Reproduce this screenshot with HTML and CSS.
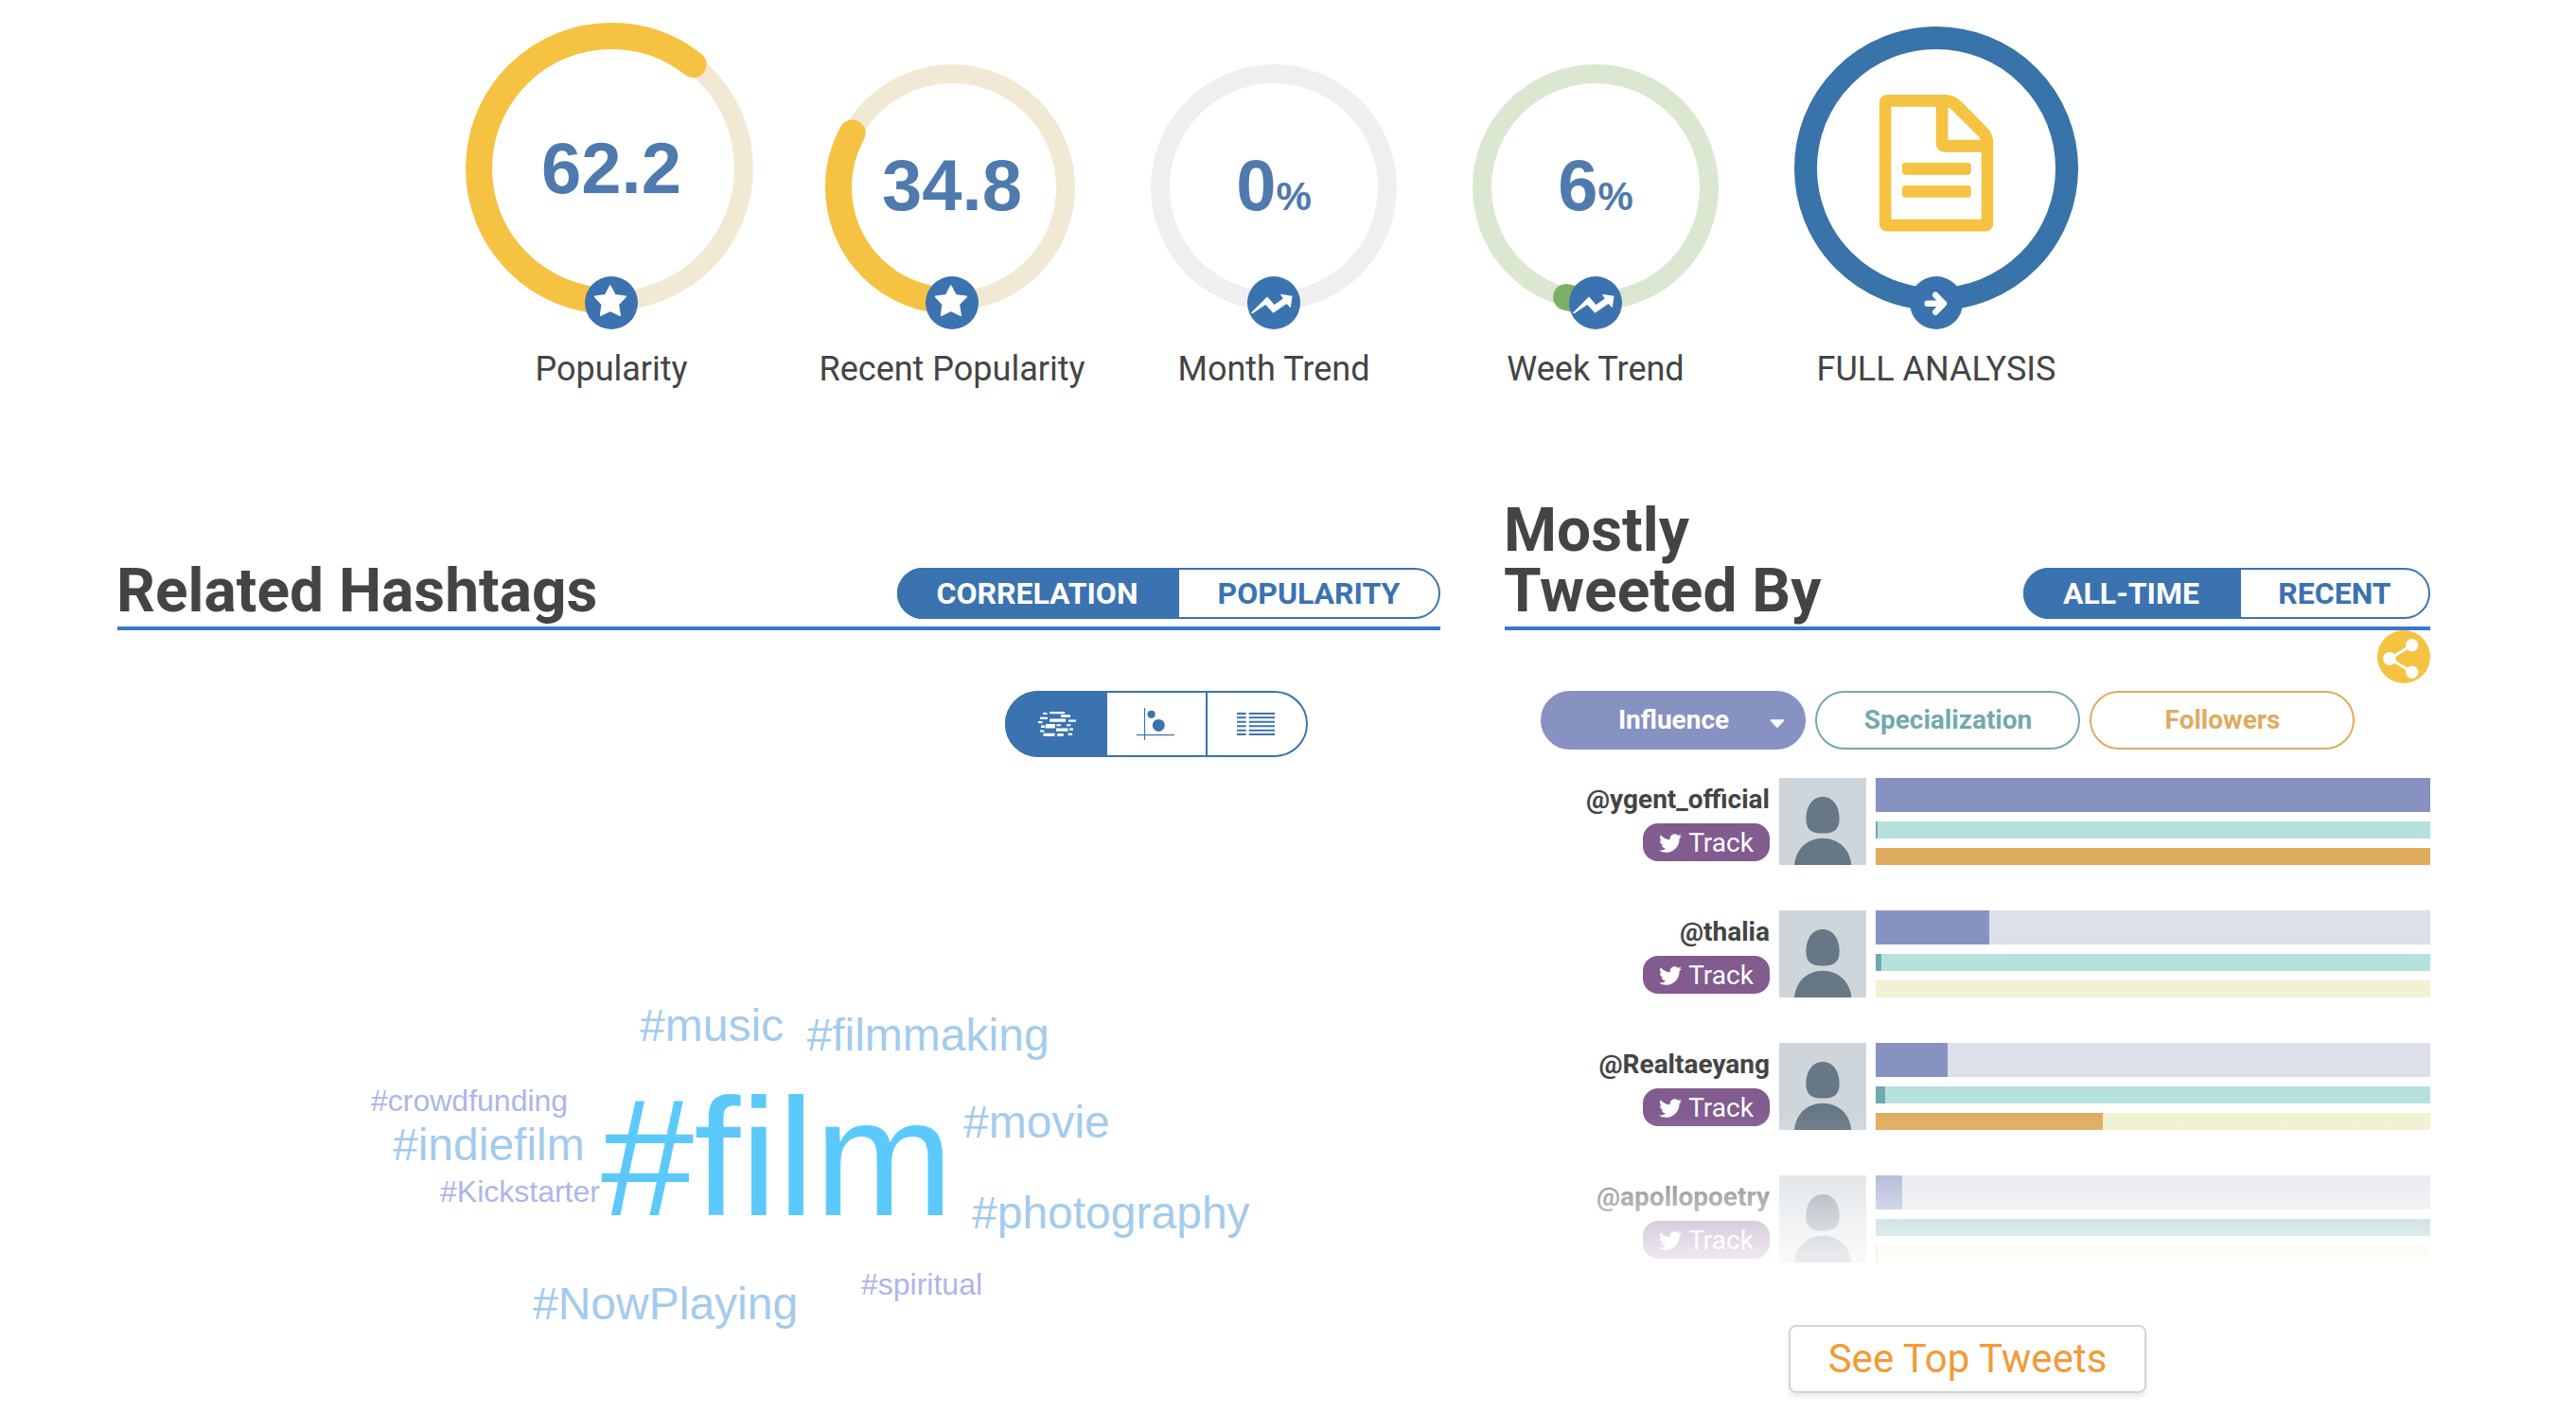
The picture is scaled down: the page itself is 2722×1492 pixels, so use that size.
FILE: index.html
```html
<!DOCTYPE html>
<html lang="en">
<head>
<meta charset="utf-8">
<title>#film hashtag analytics</title>
<link rel="stylesheet" href="styles.css">
</head>
<body>
<svg class="defs" aria-hidden="true">
  <symbol id="star" viewBox="0 0 56 56"><path d="M26.8 10 32 19.8 43.2 21.4 35.3 29.6 37.2 41.4 26.8 36.3 16.6 41.4 18.2 29.6 10.6 21.4 21.7 19.8Z" fill="#fff" stroke="#fff" stroke-width="1.6" stroke-linejoin="round"/></symbol>
  <symbol id="trend" viewBox="0 0 56 56"><path d="M4 38.6 21 21.5 28.6 30 37.8 23.6 34.8 18.7 47.6 20.7 45.7 33.2 41.5 29 27.4 38.7 19.2 29.9 5.2 39.4Z" fill="#fff"/></symbol>
  <symbol id="arrow" viewBox="0 0 56 56"><path d="M18.7 28.7H35M27.2 19.7 36 28.7 27.2 37.8" fill="none" stroke="#fff" stroke-width="6.4" stroke-linecap="round" stroke-linejoin="round"/></symbol>
  <symbol id="bird" viewBox="0 48 512 416"><path fill="#fff" d="M459.37 151.716c.325 4.548.325 9.097.325 13.645 0 138.72-105.583 298.558-298.558 298.558-59.452 0-114.68-17.219-161.137-47.106 8.447.974 16.568 1.299 25.34 1.299 49.055 0 94.213-16.568 130.274-44.832-46.132-.975-84.792-31.188-98.112-72.772 6.498.974 12.995 1.624 19.818 1.624 9.421 0 18.843-1.3 27.614-3.573-48.081-9.747-84.143-51.98-84.143-102.985v-1.299c13.969 7.797 30.214 12.67 47.431 13.319-28.264-18.843-46.781-51.005-46.781-87.391 0-19.492 5.197-37.36 14.294-52.954 51.655 63.675 129.3 105.258 216.365 109.807-1.624-7.797-2.599-15.918-2.599-24.04 0-57.828 46.782-104.934 104.934-104.934 30.213 0 57.502 12.67 76.67 33.137 23.715-4.548 46.456-13.32 66.599-25.34-7.798 24.366-24.366 44.833-46.132 57.827 21.117-2.273 41.584-8.122 60.426-16.243-14.292 20.791-32.161 39.308-52.628 54.253z"/></symbol>
  <symbol id="avatar" viewBox="0 0 92 92"><rect width="92" height="92" fill="#ced6dc"/><path d="M46 20C57 20 63.6 30 63.6 43 63.6 54 59 58.6 46 58.6S28.4 54 28.4 43C28.4 30 35 20 46 20Z" fill="#687785"/><path d="M16 92C17.5 76 29 63.8 46 63.8S75 76 76.3 92Z" fill="#687785"/></symbol>
</svg>

<main class="page">
  <section class="gauges">
    <div class="gauge gauge-lg">
      <div class="dial">
        <svg class="ring" viewBox="-150 -150 300 300">
          <circle class="track warm" r="140"/>
          <circle class="value gold" r="140" pathLength="360" stroke-dasharray="218.2 360"/>
          <text class="score" y="26">62.2</text>
        </svg>
        <span class="badge"><svg><use href="#star"/></svg></span>
      </div>
      <div class="label">Popularity</div>
    </div>
    <div class="gauge">
      <div class="dial">
        <svg class="ring" viewBox="-130 -130 260 260">
          <circle class="track warm" r="120"/>
          <circle class="value gold" r="120" pathLength="360" stroke-dasharray="118.6 360"/>
          <text class="score" y="24">34.8</text>
        </svg>
        <span class="badge"><svg><use href="#star"/></svg></span>
      </div>
      <div class="label">Recent Popularity</div>
    </div>
    <div class="gauge">
      <div class="dial">
        <svg class="ring" viewBox="-130 -130 260 260">
          <circle class="track grey" r="120"/>
          <text class="score" y="24">0<tspan class="unit">%</tspan></text>
        </svg>
        <span class="badge"><svg><use href="#trend"/></svg></span>
      </div>
      <div class="label">Month Trend</div>
    </div>
    <div class="gauge">
      <div class="dial">
        <svg class="ring" viewBox="-130 -130 260 260">
          <circle class="track mint" r="120"/>
          <circle class="value green" r="120" pathLength="360" stroke-dasharray="14.9 360"/>
          <text class="score" y="24">6<tspan class="unit">%</tspan></text>
        </svg>
        <span class="badge"><svg><use href="#trend"/></svg></span>
      </div>
      <div class="label">Week Trend</div>
    </div>
    <div class="gauge gauge-lg">
      <div class="dial">
        <svg class="ring" viewBox="-150 -150 300 300">
          <circle class="full" r="138"/>
          <svg x="-60.3" y="-78" width="120.7" height="144.7" viewBox="407 300 362 434">
            <path fill="#f5c242" fill-rule="evenodd" d="M433 300H615Q645 300 667 322L746 401Q769 424 769 454V708A26 26 0 0 1 743 734H433A26 26 0 0 1 407 708V326A26 26 0 0 1 433 300ZM445 338V695H731V482H614A27 27 0 0 1 587 455V338ZM625 341V443H728Q726 437 722 433L636 347Q631 342 625 341Z"/>
            <rect x="480" y="516" width="218" height="38" rx="10" fill="#f5c242"/>
            <rect x="480" y="588" width="218" height="38" rx="10" fill="#f5c242"/>
          </svg>
        </svg>
        <span class="badge"><svg><use href="#arrow"/></svg></span>
      </div>
      <div class="label">FULL ANALYSIS</div>
    </div>
  </section>

  <div class="panels">
    <section class="panel">
      <header class="panel-head">
        <h2>Related Hashtags</h2>
        <div class="toggle"><span class="opt on w-correlation">CORRELATION</span><span class="opt w-popularity">POPULARITY</span></div>
      </header>
      <div class="views">
        <span class="view on">
          <svg viewBox="0 0 40 34" fill="#fff"><path d="M5 5h4.4v2H5zM12.2 4h16v2.2h-16zM24 7.3h10v2.8H24zM2 9.7h8v2.2H2zM12.2 11.5h17v3.2h-17zM32 12.5h8v2.3h-8zM0 14h4.4v2.2H0zM3 18.4h4.3v2.5H3zM8 17h10v4.6H8zM19.5 17.2h4.4v2.1h-4.4zM30 17.2h4.4v2.1H30zM19 21.5h12.6v3.2H19zM33 21.4h4v2.3h-4zM2 23.4h4.4v2.2H2zM5.5 26.8h12V30h-12zM20.2 27h6.6v3h-6.6zM31.7 26.8h4.4V29h-4.4z"/></svg>
        </span>
        <span class="view">
          <svg viewBox="0 0 40 34" fill="#3b72b0"><path d="M8 0h1.1v34H8zM0 28h40.3v1.3H0z"/><circle cx="15.6" cy="6.8" r="4.1"/><circle cx="23.3" cy="18.4" r="6.5"/></svg>
        </span>
        <span class="view">
          <svg viewBox="0 0 40 34" fill="#3b72b0"><path d="M0 5h9.7v2H0zM0 9.2h9.7v2H0zM0 13.7h9.7v2H0zM0 18.3h9.7v2H0zM0 22.7h9.7v2H0zM0 27h9.7v2H0zM12.7 5H40v2H12.7zM12.7 9.2H40v2H12.7zM12.7 13.7H40v2H12.7zM12.7 18.3H40v2H12.7zM12.7 22.7H40v2H12.7zM12.7 27H40v2H12.7z"/></svg>
        </span>
      </div>
      <svg class="cloud" viewBox="124 800 1398 692">
        <text class="xl" x="635" y="1284">#film</text>
        <text class="md" x="676" y="1100">#music</text>
        <text class="md" x="852.5" y="1110">#filmmaking</text>
        <text class="md" x="415" y="1226">#indiefilm</text>
        <text class="md" x="1018" y="1202">#movie</text>
        <text class="md" x="1027" y="1298">#photography</text>
        <text class="md" x="563" y="1394">#NowPlaying</text>
        <text class="sm" x="392" y="1174">#crowdfunding</text>
        <text class="sm" x="465" y="1270">#Kickstarter</text>
        <text class="sm" x="910" y="1368">#spiritual</text>
      </svg>
    </section>

    <section class="panel">
      <header class="panel-head">
        <h2>Mostly<br>Tweeted By</h2>
        <div class="toggle"><span class="opt on w-alltime">ALL-TIME</span><span class="opt w-recent">RECENT</span></div>
      </header>
      <span class="share"><svg viewBox="0 0 56 56"><path d="M36.7 15.7 13 30 36.7 44.3" fill="none" stroke="#fff" stroke-width="3"/><circle cx="36.7" cy="15.7" r="6.7" fill="#fff"/><circle cx="13" cy="30" r="6.9" fill="#fff"/><circle cx="36.7" cy="44.3" r="6.7" fill="#fff"/></svg></span>
      <div class="tabs">
        <span class="tab influence">Influence<svg class="caret" viewBox="0 0 16 10"><path d="M1.3 1H14.7L8 8.2Z" fill="#fff" stroke="#fff" stroke-width="1.6" stroke-linejoin="round"/></svg></span>
        <span class="tab special">Specialization</span>
        <span class="tab followers">Followers</span>
      </div>
      <div class="users">
        <div class="user">
          <div class="who"><span class="name">@ygent_official</span><span class="track-btn"><svg><use href="#bird"/></svg>Track</span></div>
          <svg class="avatar"><use href="#avatar"/></svg>
          <div class="bars"><div class="bar inf"><i style="width:100%"></i></div><div class="bar spe"><i style="width:2px"></i></div><div class="bar fol"><i style="width:100%"></i></div></div>
        </div>
        <div class="user">
          <div class="who"><span class="name">@thalia</span><span class="track-btn"><svg><use href="#bird"/></svg>Track</span></div>
          <svg class="avatar"><use href="#avatar"/></svg>
          <div class="bars"><div class="bar inf"><i style="width:20.5%"></i></div><div class="bar spe"><i style="width:1%"></i></div><div class="bar fol"></div></div>
        </div>
        <div class="user">
          <div class="who"><span class="name">@Realtaeyang</span><span class="track-btn"><svg><use href="#bird"/></svg>Track</span></div>
          <svg class="avatar"><use href="#avatar"/></svg>
          <div class="bars"><div class="bar inf"><i style="width:12.9%"></i></div><div class="bar spe"><i style="width:1.7%"></i></div><div class="bar fol"><i style="width:40.9%"></i></div></div>
        </div>
        <div class="user">
          <div class="who"><span class="name">@apollopoetry</span><span class="track-btn"><svg><use href="#bird"/></svg>Track</span></div>
          <svg class="avatar"><use href="#avatar"/></svg>
          <div class="bars"><div class="bar inf"><i style="width:4.8%"></i></div><div class="bar spe"><i style="width:100%"></i></div><div class="bar fol"><i style="width:2px"></i></div></div>
        </div>
        <div class="fade"></div>
      </div>
      <div class="more"><span class="more-btn">See Top Tweets</span></div>
    </section>
  </div>
</main>
</body>
</html>
```

FILE: styles.css
```css
* { box-sizing: border-box; }

body {
  margin: 0;
  background: #fff;
  color: #444;
  font-family: Roboto, "Liberation Sans", sans-serif;
}

svg { display: block; }

.defs { position: absolute; width: 0; height: 0; }

.page {
  width: 2722px;
  height: 1492px;
  overflow: hidden;
}

/* Gauges */
.gauges {
  display: flex;
  justify-content: flex-start;
  align-items: flex-end;
  gap: 80px;
  height: 411px;
  padding-left: 496px;
}

.gauge {
  display: flex;
  flex-direction: column;
  align-items: center;
  width: 260px;
}
.gauge-lg { width: 300px; }

.dial { position: relative; width: 100%; }
.ring { width: 100%; overflow: visible; }
.ring circle { fill: none; }
.track { stroke-width: 20; }
.warm { stroke: #f2e9d5; }
.grey { stroke: #efefef; }
.mint { stroke: #dbe7d0; }
.value { stroke-width: 28; stroke-linecap: round; transform: rotate(90deg); }
.gold { stroke: #f5c242; }
.green { stroke: #7bb068; }
.full { stroke: #3873a9; stroke-width: 24; }

.score {
  fill: #4f7aae;
  font: bold 76px "Liberation Sans", Arial, sans-serif;
  text-anchor: middle;
}
.unit { font-size: 42px; }

.badge {
  position: absolute;
  left: 50%;
  bottom: -20px;
  width: 56px;
  height: 56px;
  margin-left: -28px;
  border-radius: 50%;
  background: #3b72b0;
}
.badge svg { width: 56px; height: 56px; }

.label {
  margin-top: 41px;
  font-size: 36px;
  line-height: 42px;
  white-space: nowrap;
}

/* Panels */
.panels {
  display: grid;
  grid-template-columns: 1398px 978px;
  column-gap: 68px;
  padding: 117px 0 0 124px;
}

.panel { position: relative; }

.panel-head {
  display: flex;
  align-items: flex-end;
  justify-content: space-between;
  height: 138px;
  border-bottom: 4px solid #3a78cb;
}

h2 {
  margin: 0 0 5px -1px;
  font-size: 64px;
  line-height: 64px;
  font-weight: 700;
}

.toggle {
  display: flex;
  height: 54px;
  margin-bottom: 8px;
  border: 2px solid #3b72b0;
  border-radius: 27px;
}
.opt {
  color: #3b72b0;
  font-size: 32px;
  font-weight: 700;
  line-height: 50px;
  text-align: center;
}
.opt.on {
  margin: -2px 0 -2px -2px;
  padding-right: 2px;
  border-radius: 27px 0 0 27px;
  background: #3b72b0;
  color: #fff;
  line-height: 54px;
}
.w-correlation { width: 298px; }
.w-popularity { width: 274px; }
.w-alltime { width: 230px; }
.w-recent { width: 198px; }

.views {
  display: flex;
  width: 320px;
  height: 70px;
  margin: 64px 0 0 938px;
  border: 2px solid #3b72b0;
  border-radius: 35px;
}
.view {
  display: flex;
  align-items: center;
  justify-content: center;
  width: 104px;
  padding-right: 2px;
}
.view + .view { width: 106px; border-right: 2px solid #3b72b0; }
.view:last-child { width: 104px; border-right: 0; }
.view svg { width: 40px; height: 34px; }
.view.on {
  width: 108px;
  margin: -2px 0 -2px -2px;
  padding: 0 0 0 2px;
  border-radius: 35px 0 0 35px;
  background: #3b72b0;
}

.cloud { width: 1398px; height: 692px; }
.cloud text { font-family: "Liberation Sans", Arial, sans-serif; }
.xl { font-size: 176.5px; fill: #5bc9fb; }
.md { font-size: 48px; fill: #a4cbec; }
.sm { font-size: 32px; fill: #adb5ea; }

/* Top users */
.share {
  position: absolute;
  top: 138px;
  right: 0;
  width: 56px;
  height: 56px;
  border-radius: 50%;
  background: #f5c242;
}

.tabs {
  display: flex;
  gap: 10px;
  margin: 64px 0 30px 38px;
}
.tab {
  position: relative;
  width: 280px;
  height: 62px;
  padding-left: 1px;
  border: 2px solid;
  border-radius: 31px;
  font-size: 28px;
  font-weight: 700;
  line-height: 58px;
  text-align: center;
}
.influence { background: #8792c2; border-color: #8792c2; color: #fff; }
.special { color: #72a9ae; }
.followers { color: #dfac5e; }
.caret {
  position: absolute;
  right: 20px;
  top: 28px;
  width: 16px;
  height: 10px;
}

.users {
  position: relative;
  display: flex;
  flex-direction: column;
  gap: 48px;
}
.user {
  display: flex;
  height: 92px;
}
.who {
  display: flex;
  flex-direction: column;
  align-items: flex-end;
  width: 280px;
  margin-right: 10px;
}
.name {
  height: 48px;
  font-size: 28px;
  font-weight: 700;
  line-height: 46px;
}
.track-btn {
  display: flex;
  align-items: center;
  justify-content: center;
  gap: 7px;
  width: 134px;
  height: 40px;
  padding-top: 1px;
  border-radius: 16px;
  background: #825b8f;
  color: #fff;
  font-size: 28px;
  line-height: 39px;
}
.track-btn svg { width: 24px; height: 20px; }
.avatar { width: 92px; height: 92px; margin-right: 10px; }

.bars {
  display: flex;
  flex-direction: column;
  gap: 10px;
  width: 586px;
}
.bar { height: 18px; }
.bar i { display: block; height: 100%; }
.bar.inf { height: 36px; background: #dddfea; }
.inf i { background: #8792c2; }
.spe { background: #b7e1dc; }
.spe i { background: #72a9ae; }
.fol { background: #f2f1d3; }
.fol i { background: #dfac5e; }

.fade {
  position: absolute;
  left: 0;
  right: 0;
  top: 352px;
  height: 180px;
  background: linear-gradient(to bottom,
    rgba(255, 255, 255, 0) 0,
    rgba(255, 255, 255, .07) 20px,
    rgba(255, 255, 255, .4) 68px,
    rgba(255, 255, 255, .64) 104px,
    rgba(255, 255, 255, .84) 150px,
    rgba(255, 255, 255, .9) 180px);
}

.more {
  display: flex;
  justify-content: center;
  padding-top: 66px;
}
.more-btn {
  width: 378px;
  height: 72px;
  border: 2px solid #d3d3d3;
  border-radius: 8px;
  box-shadow: 0 4px 5px rgba(0, 0, 0, .08);
  color: #f09b38;
  font-size: 42px;
  line-height: 68px;
  text-align: center;
}
```
